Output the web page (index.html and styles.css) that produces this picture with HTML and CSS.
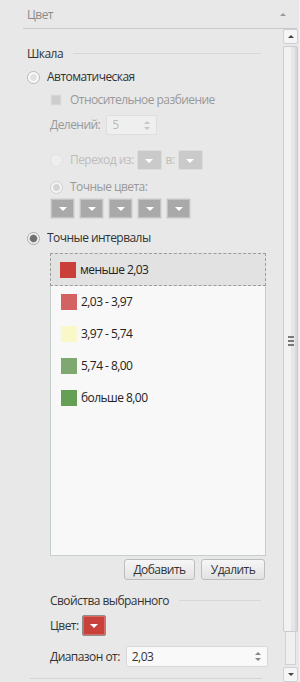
FILE: index.html
```html
<!DOCTYPE html>
<html>
<head>
<meta charset="utf-8">
<link rel="stylesheet" href="styles.css">
</head>
<body>
<div class="panel">
  <div class="header">
    <span class="header-title">Цвет</span>
    <span class="header-caret"></span>
  </div>
  <div class="body">
    <div class="content">
      <div class="section-title sec-scale"><span>Шкала</span><i class="sep"></i></div>

      <div class="row r-auto lvl1">
        <span class="radio"></span><span class="lbl">Автоматическая</span>
      </div>
      <div class="row r-check lvl2">
        <span class="checkbox"></span><span class="lbl dis">Относительное разбиение</span>
      </div>
      <div class="row r-div lvl2">
        <span class="lbl dis">Делений:</span>
        <span class="spin dis-spin"><span class="spin-val">5</span><span class="spin-arrows"><i class="up"></i><i class="down"></i></span></span>
      </div>
      <div class="row r-trans lvl2">
        <span class="radio faint"></span><span class="lbl faint-t">Переход из:</span>
        <span class="dd dd-light"><i class="tri"></i></span>
        <span class="lbl faint-t in-b">в:</span>
        <span class="dd dd-light"><i class="tri"></i></span>
      </div>
      <div class="row r-exact lvl2">
        <span class="radio dim"></span><span class="lbl dis">Точные цвета:</span>
      </div>
      <div class="row r-swatches lvl2">
        <span class="dd"><i class="tri"></i></span>
        <span class="dd"><i class="tri"></i></span>
        <span class="dd"><i class="tri"></i></span>
        <span class="dd"><i class="tri"></i></span>
        <span class="dd"><i class="tri"></i></span>
      </div>
      <div class="row r-intervals lvl1">
        <span class="radio checked"></span><span class="lbl">Точные интервалы</span>
      </div>

      <div class="list">
        <div class="item selected"><span class="sw c1"></span>меньше 2,03</div>
        <div class="item"><span class="sw c2"></span>2,03 - 3,97</div>
        <div class="item"><span class="sw c3"></span>3,97 - 5,74</div>
        <div class="item"><span class="sw c4"></span>5,74 - 8,00</div>
        <div class="item"><span class="sw c5"></span>больше 8,00</div>
      </div>

      <div class="buttons">
        <button class="btn btn-add">Добавить</button>
        <button class="btn btn-del">Удалить</button>
      </div>

      <div class="section-title sec-props"><span>Свойства выбранного</span><i class="sep"></i></div>

      <div class="row r-color lvl2">
        <span class="lbl">Цвет:</span>
        <span class="dd dd-red"><i class="tri"></i></span>
      </div>
      <div class="row r-range lvl2">
        <span class="lbl">Диапазон от:</span>
        <span class="spin range-spin"><span class="spin-val">2,03</span><span class="spin-arrows"><i class="up"></i><i class="down"></i></span></span>
      </div>
      <div class="bottom-line"></div>
    </div>
    <div class="scrollbar">
      <div class="sb-btn"><i class="sb-up"></i></div>
      <div class="sb-thumb"><span class="grip"><i></i><i></i><i></i></span></div>
      <div class="sb-track"></div>
      <div class="sb-btn"><i class="sb-down"></i></div>
    </div>
  </div>
</div>
</body>
</html>
```

FILE: styles.css
```css
* { box-sizing: border-box; }
html, body { margin: 0; padding: 0; }
body {
  width: 300px;
  height: 682px;
  overflow: hidden;
  background: #e8e8e8;
  font-family: "Open Sans", "Noto Sans", sans-serif;
  font-size: 12px;
  letter-spacing: -0.55px;
  color: #333;
}
.panel {
  width: 300px;
  height: 682px;
  border-right: 1px solid #c4c4c8;
  position: relative;
  display: flex;
  flex-direction: column;
}
.panel::after {
  content: "";
  position: absolute;
  right: -1px;
  top: 0;
  bottom: 0;
  width: 1px;
  background: #f2f2f2;
}
.header {
  height: 29px;
  margin-left: 23px;
  margin-right: 2px;
  border-bottom: 1px solid #c6cacf;
  display: flex;
  align-items: center;
  justify-content: space-between;
  padding-left: 4px;
  padding-right: 11px;
  padding-top: 1px;
}
.header-title { color: #8a8a8a; line-height: 14px; }
.header-caret {
  width: 0; height: 0;
  border-left: 3px solid transparent;
  border-right: 3px solid transparent;
  border-bottom: 3px solid #999;
}
.body { flex: 1; display: flex; min-height: 0; }
.content { width: 283px; padding-left: 27px; display: flex; flex-direction: column; }

.section-title { display: flex; align-items: center; height: 14px; line-height: 14px; }
.section-title .sep { flex: 1; height: 1px; background: #d3d8dc; margin-left: 10px; margin-right: 22px; margin-top: -2px; }
.sec-scale { margin-top: 18px; }
.sec-props { margin-top: 14px; padding-left: 23px; }

.row { display: flex; align-items: center; height: 20px; }
.lvl2 { padding-left: 23px; }
.lbl { line-height: 14px; white-space: nowrap; }
.dis { color: #999; }
.faint-t { color: #bdbdbd; }

.r-auto { margin-top: 6px; }
.r-check { margin-top: 3px; }
.r-div { margin-top: 5px; }
.r-trans { margin-top: 15px; }
.r-exact { margin-top: 7px; }
.r-swatches { margin-top: 1px; height: 21px; gap: 4px; }
.r-intervals { margin-top: 9px; }

.radio {
  width: 13px; height: 13px;
  border-radius: 50%;
  border: 1px solid #b9b9b9;
  background: radial-gradient(circle, #e2e2e2 0 3px, #fafafa 4px);
  margin-right: 7px;
  flex: none;
}
.radio.checked { background: radial-gradient(circle, #6f6f6f 0 3px, #9a9a9a 3.6px, #f4f4f4 4.4px); border-color: #aaa; }
.radio.dim { border-color: #cfcfcf; background: radial-gradient(circle, #d4d4d4 0 3px, #f4f4f4 4px); }
.radio.faint { border-color: #e0e0e0; background: #eeeeee; }

.checkbox {
  width: 12px; height: 12px;
  border-radius: 2px;
  border: 1px solid #e4e4e4;
  background: #cdcdcd;
  box-shadow: inset 0 0 0 1px #d6d6d6;
  margin-right: 8px;
  flex: none;
}

.spin {
  display: flex;
  align-items: center;
  justify-content: space-between;
  height: 20px;
  border-radius: 2px;
}
.dis-spin {
  width: 51px;
  margin-left: 6px;
  background: #efefef;
  border: 1px solid #dedede;
  padding: 0 6px 0 5px;
  color: #bbb;
}
.range-spin {
  width: 142px;
  height: 21px;
  margin-left: 6px;
  background: #f9f9f9;
  border: 1px solid #d8d8d8;
  padding: 0 6px 0 5px;
  color: #333;
}
.spin-val { line-height: 14px; }
.spin-arrows { display: flex; flex-direction: column; gap: 3px; }
.spin-arrows i { width: 0; height: 0; border-left: 3px solid transparent; border-right: 3px solid transparent; }
.spin-arrows .up { border-bottom: 3px solid #888; }
.spin-arrows .down { border-top: 3px solid #888; }
.dis-spin .spin-arrows .up { border-bottom-color: #c6c6c6; }
.dis-spin .spin-arrows .down { border-top-color: #c6c6c6; }

.dd {
  width: 25px; height: 21px;
  border: 1px solid #dadada;
  border-radius: 2px;
  background: #a9a9a9;
  box-shadow: inset 0 0 0 1px #c4c4c4;
  display: flex; align-items: center; justify-content: center;
  flex: none;
}
.dd .tri { width: 0; height: 0; border-left: 4px solid transparent; border-right: 4px solid transparent; border-top: 4px solid #fff; margin-top: 1px; }
.dd-light { background: #cacaca; border-color: #dcdcdc; box-shadow: none; height: 20px; }
.r-trans .dd-light { margin-left: 3px; }
.in-b { margin-left: 4px; }
.dd-red { width: 24px; background: #c9413b; border: 1px solid #8e8e8e; box-shadow: inset 0 0 0 1px #d96a64; margin-left: 3px; }

.list {
  margin-top: 5px;
  margin-left: 23px;
  width: 216px;
  height: 303px;
  border: 1px solid #c6cecb;
  background: #f8f8f8;
}
.item { height: 32px; display: flex; align-items: center; padding-left: 10px; line-height: 14px; color: #222; }
.item.selected { height: 33px; background: #e2e2e2; border: 1px dashed #9c9c9c; padding-left: 9px; margin: -1px -1px 0 -1px; }
.sw { width: 16px; height: 16px; margin-right: 4px; flex: none; }
.c1 { background: #c9403a; }
.c2 { background: #d36262; }
.c3 { background: #f8f8c8; }
.c4 { background: #7fa871; }
.c5 { background: #659f56; }

.buttons { display: flex; justify-content: flex-end; gap: 6px; margin-top: 3px; width: 238px; }
.btn {
  height: 21px;
  font-family: inherit;
  font-size: 12px;
  letter-spacing: -0.55px;
  color: #333;
  border: 1px solid #bdbdbd;
  border-radius: 3px;
  background: linear-gradient(#f6f6f6, #e2e2e2);
  padding: 0;
  line-height: 14px;
}
.btn-add { width: 71px; }
.btn-del { width: 64px; }

.r-color { margin-top: 7px; height: 21px; }
.r-range { margin-top: 10px; height: 21px; }
.bottom-line { margin-top: 11px; margin-left: 3px; width: 232px; height: 1px; background: #d3d6d9; }

.scrollbar { width: 15px; display: flex; flex-direction: column; align-items: center; }
.sb-btn {
  width: 15px; height: 15px;
  border: 1px solid #cfcfd4;
  border-radius: 2px;
  background: #f5f5f5;
  display: flex; align-items: center; justify-content: center;
  flex: none;
}
.sb-up { width: 0; height: 0; border-left: 3px solid transparent; border-right: 3px solid transparent; border-bottom: 3px solid #444; }
.sb-down { width: 0; height: 0; border-left: 3px solid transparent; border-right: 3px solid transparent; border-top: 3px solid #444; }
.sb-thumb {
  margin-top: 2px;
  width: 15px;
  height: 586px;
  border: 1px solid #cbcbd2;
  border-radius: 2px;
  background: linear-gradient(90deg, #f2f2f2 0 55%, #e6e6e6 55% 88%, #d8d8d8 88%);
  display: flex; align-items: center; justify-content: center;
  flex: none;
}
.grip { display: flex; flex-direction: column; gap: 2px; margin-top: 4px; }
.grip i { display: block; width: 6px; height: 2px; background: #7a7a7a; }
.sb-track {
  width: 11px;
  flex: 1;
  border: 1px solid #d2d2d6;
  border-top: none;
  background: #f0f0f0;
  margin-bottom: 2px;
}
```
